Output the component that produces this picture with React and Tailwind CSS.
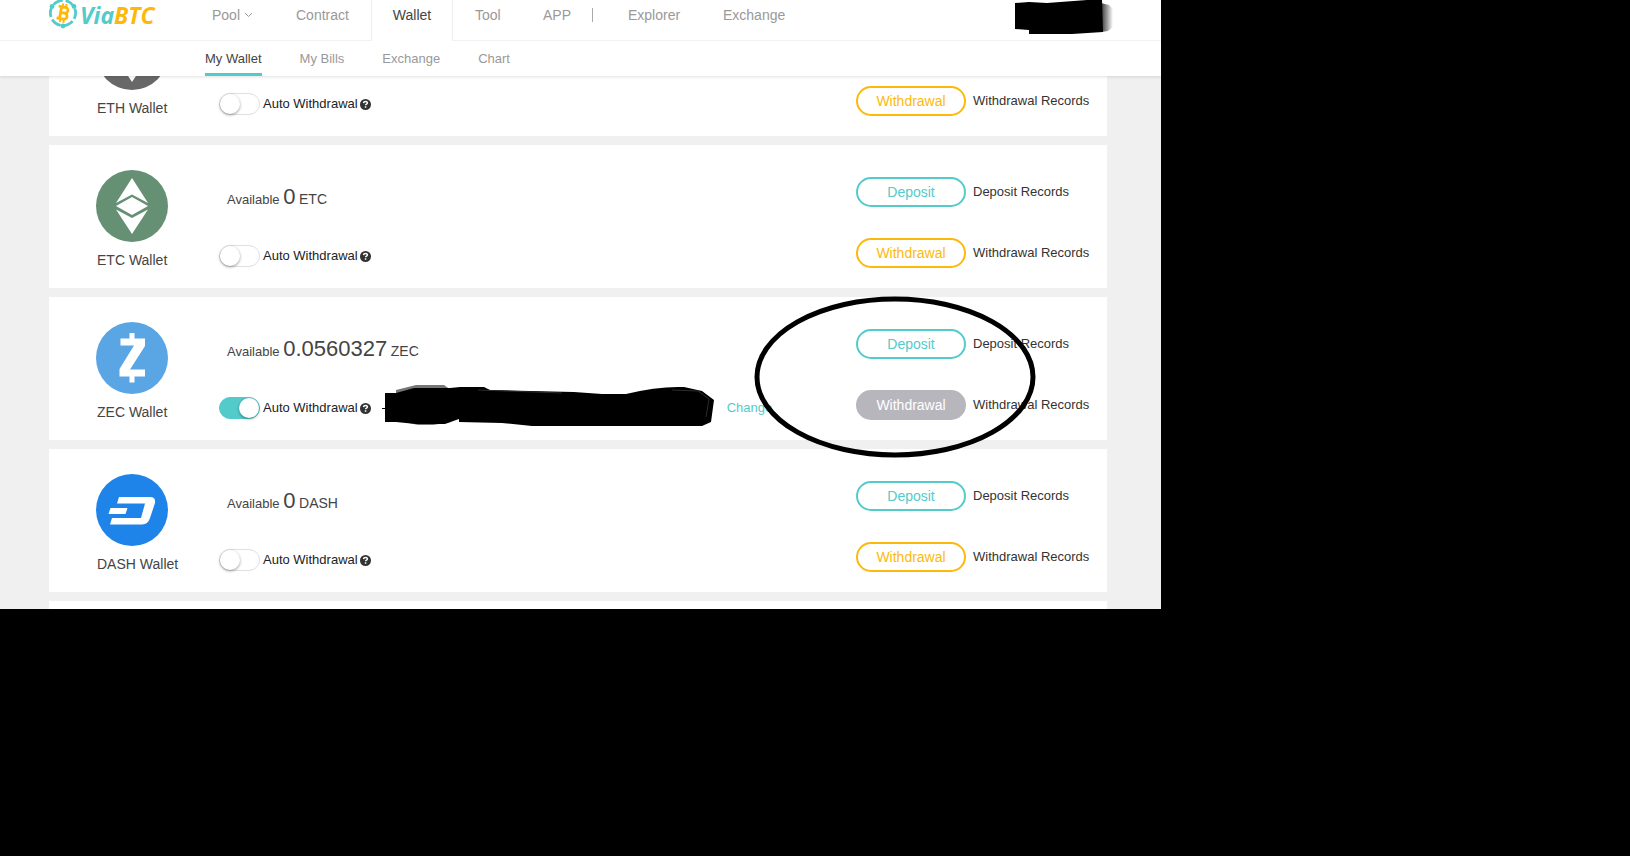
import React from 'react';

const wallets = [
  { coin: 'ETH', amount: '0', auto: false },
  { coin: 'ETC', amount: '0', auto: false },
  { coin: 'ZEC', amount: '0.0560327', auto: true },
  { coin: 'DASH', amount: '0', auto: false },
];

function Logo() {
  return (
    <a href="#home" aria-label="ViaBTC" className="flex h-[41px] w-[107px] shrink-0">
      <svg width="112" height="41" viewBox="0 0 112 41" className="shrink-0 overflow-visible">
        <g fill="none" stroke="#52cbca" strokeWidth="2.8">
          <circle cx="14" cy="13" r="12.6" strokeDasharray="10.400 2.800" transform="rotate(-20 14 13)" />
        </g>
        <g fill="#52cbca">
          <circle cx="14" cy="26" r="2.400" />
          <circle cx="3" cy="6.500" r="2.400" />
          <circle cx="25" cy="6.500" r="2.400" />
        </g>
        <g fill="none" stroke="#fdb90b" strokeWidth="2.8" transform="rotate(10 14 13)">
          <path d="M8.500 7h7a2.800 2.800 0 0 1 0 5.800H11.500M15.500 12.800a3 3 0 0 1 0 6.200H8.500M11.500 7v12" />
          <path d="M12.500 3.500v3M16 3.500v3M12.500 19.500v3M16 19.500v3" strokeWidth="2" />
        </g>
        <text x="31" y="24" fontSize="23" fontWeight="700" fontStyle="italic" fontFamily="'Open Sans', sans-serif">
          <tspan fill="#52cbca">Via</tspan>
          <tspan fill="#fdb90b">BTC</tspan>
        </text>
      </svg>
    </a>
  );
}

function CoinIcon({ coin }) {
  if (coin === 'ZEC') {
    return (
      <svg width="72" height="72" viewBox="0 0 72 72">
        <circle cx="36" cy="36" r="36" fill="#5aa5e4" />
        <path fill="#fff" d="M33.500 11h5v5.500H49V24L34 47.500h15V54.500H38.500V60.500h-5v-6H23.500V47L38 23.500H24.500v-7h9z" />
      </svg>
    );
  }
  if (coin === 'DASH') {
    return (
      <svg width="72" height="72" viewBox="0 0 72 72">
        <circle cx="36" cy="36" r="36" fill="#1f84ea" />
        <path fill="#fff" d="M23 23h31q6 0 5 6l-5 15q-2 6.500-8 6.500H14l2-6.500h29L49 29.500H21z" />
        <path fill="#fff" d="M14.500 34h17l-2 6H12.500z" />
      </svg>
    );
  }
  return (
    <svg width="72" height="72" viewBox="0 0 72 72">
      <circle cx="36" cy="36" r="36" fill={coin === 'ETH' ? '#686868' : '#669073'} />
      <path fill="#fff" d="M36 8l16 25-16-8.500L20 33zM36 27l16 9-16 9-16-9zM20 39.500L36 48l16-8.500L36 64z" />
    </svg>
  );
}

function Toggle({ id, on }) {
  return (
    <span className="relative flex w-[41px] h-[22px] shrink-0">
      <input
        id={id}
        type="checkbox"
        role="switch"
        defaultChecked={on}
        className="peer appearance-none w-full h-full rounded-full border border-[#dfdfdf] bg-white checked:bg-[#52cbca] checked:border-[#52cbca]"
      />
      <span className="absolute left-px top-px w-5 h-5 rounded-full bg-white shadow-[0_1px_3px_rgba(0,0,0,0.4)] pointer-events-none peer-checked:left-5"></span>
    </span>
  );
}

function HelpIcon() {
  return (
    <svg width="11" height="11" viewBox="0 0 11 11" className="ml-0.5 shrink-0">
      <circle cx="5.500" cy="5.500" r="5.500" fill="#333" />
      <path d="M3.500 4.200q.2-1.800 2-1.800t1.900 1.500q0 .8-.9 1.200-.9.400-.9 1.200M5.600 7.200v1.500" fill="none" stroke="#fff" strokeWidth="1.500" />
    </svg>
  );
}

function Scribble() {
  return (
    <svg width="334" height="42" viewBox="0 0 334 42" className="-mt-1.5 ml-[11px] shrink-0">
      <path fill="#777" d="M14 6L34 1h28l7 5v32l-18 3H36L14 36z" />
      <path d="M0 24h4v-2h4v3H0z" />
      <path d="M3 9h11l18-5h36l10-1h24l6 3 84 2 28 2h24q32-8 58-7l18 4 12 9-3 22-9 4h-22l-44 1H160l-40-4-43-1v-3l-14 5H34L14 38H3z" />
      <path d="M96 6l84 3M290 6l26 1 11 8-3 18" stroke="#2c2c2c" fill="none" />
    </svg>
  );
}

function ActionRow({ label, color }) {
  return (
    <div className="flex items-center gap-[7px]">
      <button type="button" className={`w-[110px] h-[30px] rounded-full border-2 text-sm leading-none ${color}`}>
        {label}
      </button>
      <a href="#records" className="text-[13px] leading-5 text-[#333] whitespace-nowrap">{label} Records</a>
    </div>
  );
}

function WalletCard({ coin, amount, auto }) {
  return (
    <section className="flex h-[143px] bg-white pt-[25px]">
      <div className="w-[170px] shrink-0 pl-[47px]">
        <CoinIcon coin={coin} />
        <h2 className="mt-2 pl-px text-sm leading-5 text-[#444] whitespace-nowrap">{coin} Wallet</h2>
      </div>
      <div className="flex-1 min-w-0">
        <p className="h-[60px] pt-[13px] pl-2 text-[13px] leading-7 text-[#444] whitespace-nowrap">
          Available <span className="text-[22px]">{amount}</span> <span className="text-sm">{coin}</span>
        </p>
        <div className="mt-3.5 flex items-center h-6">
          <Toggle id={`auto-${coin}`} on={auto} />
          <label htmlFor={`auto-${coin}`} className="ml-[3px] text-[13px] leading-5 text-[#222] whitespace-nowrap">
            Auto Withdrawal
          </label>
          <HelpIcon />
          {auto && <Scribble />}
          {auto && <a href="#change" className="ml-[11px] text-[13px] leading-5 text-[#52cbca]">Change</a>}
        </div>
      </div>
      <div className="w-[251px] shrink-0 flex flex-col gap-[31px] pt-[7px]">
        <ActionRow label="Deposit" color="border-[#52cbca] text-[#52cbca]" />
        <ActionRow
          label="Withdrawal"
          color={auto ? 'border-[#b8b6bd] bg-[#b8b6bd] text-white' : 'border-[#fdb90b] text-[#fdb90b]'}
        />
      </div>
    </section>
  );
}

function Header() {
  return (
    <header className="relative z-10 bg-white shadow-[0_1px_3px_rgba(0,0,0,0.12)]">
      <div className="flex h-[41px] pl-[49px] pr-12 border-b border-[#f2f2f2] text-sm leading-[30px] text-[#999]">
        <Logo />
        <nav className="flex ml-14">
          <a href="#pool" className="flex items-center h-[30px] w-[84px]">
            Pool
            <svg width="9" height="6" viewBox="0 0 9 6" className="ml-1">
              <path d="M1 1l3.500 3.500L8 1" fill="none" stroke="#999" />
            </svg>
          </a>
          <a href="#contract" className="w-[75px]">Contract</a>
          <a href="#wallet" className="w-[82px] h-[41px] text-center bg-white border-x border-[#eee] text-[#444]">Wallet</a>
          <a href="#tool" className="w-[68px] pl-[22px]">Tool</a>
          <a href="#app" className="w-[68px] pl-[22px]">APP</a>
          {/* Divider between site sections and external tools */}
          <span className="w-[39px] pl-[3px] h-[30px] flex items-center">
            <span className="w-px h-3.5 bg-[#aaa]"></span>
          </span>
          <a href="#explorer" className="w-[95px]">Explorer</a>
          <a href="#exchange">Exchange</a>
        </nav>
        <svg width="98" height="34" viewBox="0 0 98 34" className="ml-auto shrink-0">
          <defs>
            <linearGradient id="smudge">
              <stop offset="0" stopColor="#333" />
              <stop offset="1" stopColor="#fff" />
            </linearGradient>
          </defs>
          <path d="M86 3l8 2 4 4v18l-5 4-7 1z" fill="url(#smudge)" />
          <path d="M0 3l14-1 18 1 40-3h15l1 32-31 2H14v-4L0 29z" />
        </svg>
      </div>
      <nav className="flex gap-[38px] h-[35px] pl-[205px] text-[13px] leading-[35px] text-[#999]">
        <a href="#my-wallet" className="border-b-3 border-[#52cbca] text-[#444]">My Wallet</a>
        <a href="#bills">My Bills</a>
        <a href="#sub-exchange">Exchange</a>
        <a href="#chart">Chart</a>
      </nav>
    </header>
  );
}

export default function App() {
  return (
    <div className="min-h-screen bg-black font-['Liberation_Sans',Arial,sans-serif]">
      <div className="grid grid-cols-[1161fr_469fr]">
        <div className="relative bg-[#f0f0f0] overflow-hidden">
          <Header />
          <main className="flex flex-col gap-[9px] -mt-[83px] pl-[49px] pr-[54px]">
            {wallets.map((wallet) => (
              <WalletCard key={wallet.coin} {...wallet} />
            ))}
            <div className="h-2 bg-white"></div>
          </main>
          {/* Hand-drawn circle over the ZEC actions */}
          <svg width="282" height="162" viewBox="0 0 282 162" className="absolute right-[125px] top-[296px] pointer-events-none">
            <ellipse cx="141" cy="81" rx="138" ry="78" fill="none" stroke="#000" strokeWidth="5" />
          </svg>
        </div>
      </div>
    </div>
  );
}
